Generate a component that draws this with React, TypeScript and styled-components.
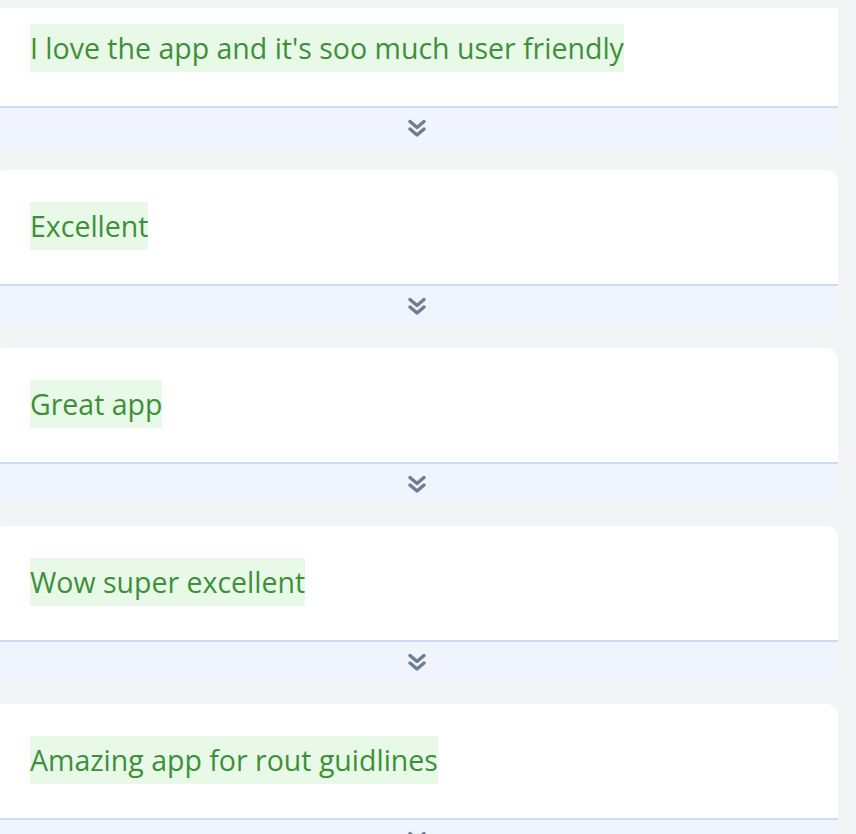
import styled, { createGlobalStyle } from 'styled-components';

const reviews = [
  "I love the app and it's soo much user friendly",
  'Excellent',
  'Great app',
  'Wow super excellent',
  'Amazing app for rout guidlines',
];

// double chevron used on the expand bar
function DoubleChevron() {
  return (
    <svg width='18' height='19' viewBox='0 0 18 19' fill='none'>
      <path
        d='M2 2.5 L9 8.5 L16 2.5 M2 10 L9 16 L16 10'
        stroke='currentColor'
        strokeWidth='3.4'
        strokeLinecap='round'
        strokeLinejoin='round'
      />
    </svg>
  );
}

export default function App() {
  return (
    <>
      <GlobalStyle />
      <Viewport>
        <ReviewList>
          {reviews.map((text, i) => (
            <ReviewCard key={text} $first={i === 0}>
              <ReviewBody $first={i === 0}>
                <ReviewText>{text}</ReviewText>
              </ReviewBody>
              <ExpandBar type='button'>
                <DoubleChevron />
              </ExpandBar>
            </ReviewCard>
          ))}
        </ReviewList>
      </Viewport>
    </>
  );
}

const GlobalStyle = createGlobalStyle`
  html, body {
    margin: 0;
    padding: 0;
    background: #f3f4f6;
  }
`;

const Viewport = styled.div`
  height: 834px;
  overflow: hidden;
  padding-top: 8px;
  box-sizing: border-box;
`;

const ReviewList = styled.div`
  display: flex;
  flex-direction: column;
  gap: 22px;
  width: 846px;
  margin-left: -8px;
`;

const ReviewCard = styled.div<{ $first?: boolean }>`
  display: flex;
  flex-direction: column;
  background: #ffffff;
  border-radius: ${({ $first }) => ($first ? '0' : '12px 12px 0 0')};
  overflow: hidden;
`;

const ReviewBody = styled.div<{ $first?: boolean }>`
  display: flex;
  padding: ${({ $first }) => ($first ? '16px' : '32px')} 0 34px 38px;
`;

const ReviewText = styled.span`
  background: #e8f9e8;
  color: #3f8f3a;
  font-family: 'Open Sans', 'Noto Sans', sans-serif;
  font-size: 28.5px;
  line-height: 48px;
  white-space: nowrap;
`;

const ExpandBar = styled.button`
  display: flex;
  align-items: center;
  justify-content: center;
  height: 42px;
  padding: 0 0 0 3px;
  border: none;
  border-top: 2px solid #cddcf6;
  background: #eff4fd;
  color: #6f7d92;
  cursor: pointer;
  box-sizing: border-box;
`;
